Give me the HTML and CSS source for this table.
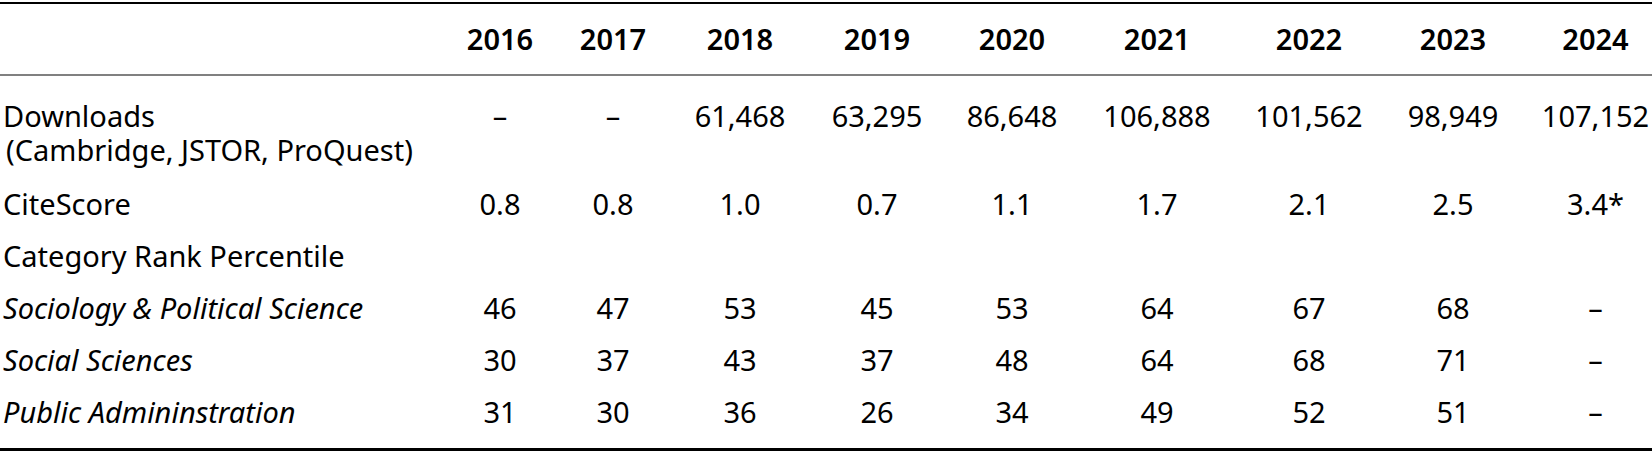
FILE: index.html
```html
<!DOCTYPE html>
<html lang="en">
<head>
<meta charset="utf-8">
<title>Journal metrics</title>
<link rel="stylesheet" href="styles.css">
</head>
<body>
<table class="metrics">
  <colgroup>
    <col class="c-label">
    <col class="c-2016">
    <col class="c-2017">
    <col class="c-2018">
    <col class="c-2019">
    <col class="c-2020">
    <col class="c-2021">
    <col class="c-2022">
    <col class="c-2023">
    <col class="c-2024">
  </colgroup>
  <thead>
    <tr>
      <th class="label"></th>
      <th>2016</th><th>2017</th><th>2018</th><th>2019</th><th>2020</th><th>2021</th><th>2022</th><th>2023</th><th class="last">2024</th>
    </tr>
  </thead>
  <tbody>
    <tr class="first">
      <td class="label"><span class="line">Downloads</span><span class="line indent">(Cambridge, JSTOR, ProQuest)</span></td>
      <td>–</td><td>–</td><td>61,468</td><td>63,295</td><td>86,648</td><td>106,888</td><td>101,562</td><td>98,949</td><td class="last">107,152</td>
    </tr>
    <tr>
      <td class="label">CiteScore</td>
      <td>0.8</td><td>0.8</td><td>1.0</td><td>0.7</td><td>1.1</td><td>1.7</td><td>2.1</td><td>2.5</td><td class="last">3.4*</td>
    </tr>
    <tr>
      <td class="label">Category Rank Percentile</td>
      <td></td><td></td><td></td><td></td><td></td><td></td><td></td><td></td><td class="last"></td>
    </tr>
    <tr>
      <td class="label sub">Sociology &amp; Political Science</td>
      <td>46</td><td>47</td><td>53</td><td>45</td><td>53</td><td>64</td><td>67</td><td>68</td><td class="last">–</td>
    </tr>
    <tr>
      <td class="label sub">Social Sciences</td>
      <td>30</td><td>37</td><td>43</td><td>37</td><td>48</td><td>64</td><td>68</td><td>71</td><td class="last">–</td>
    </tr>
    <tr class="final">
      <td class="label sub">Public Admininstration</td>
      <td>31</td><td>30</td><td>36</td><td>26</td><td>34</td><td>49</td><td>52</td><td>51</td><td class="last">–</td>
    </tr>
  </tbody>
</table>
</body>
</html>
```

FILE: styles.css
```css
html, body {
  margin: 0;
  padding: 0;
  background: #ffffff;
}

body {
  font-family: "Noto Sans", "Open Sans", "Liberation Sans", sans-serif;
  font-size: 29px;
  line-height: 34px;
  color: #000000;
}

.metrics {
  width: 1652px;
  table-layout: fixed;
  border-collapse: separate;
  border-spacing: 0;
  margin-top: 2px;
  border-top: 2px solid #000000;
  border-bottom: 3px solid #000000;
}

.c-label { width: 443px; }
.c-2016 { width: 114px; }
.c-2017 { width: 112px; }
.c-2018 { width: 142px; }
.c-2019 { width: 132px; }
.c-2020 { width: 138px; }
.c-2021 { width: 152px; }
.c-2022 { width: 152px; }
.c-2023 { width: 136px; }
.c-2024 { width: 131px; }

.metrics th,
.metrics td {
  padding: 9px 0;
  text-align: center;
  vertical-align: top;
  white-space: nowrap;
}

.metrics thead th {
  font-weight: 600;
  padding-top: 18px;
  padding-bottom: 18px;
  border-bottom: 2px solid #808080;
}

.metrics .label {
  text-align: left;
  padding-left: 3px;
}

.metrics .line {
  display: block;
}

.metrics .indent {
  padding-left: 3px;
}

.metrics .last {
  padding-left: 18px;
}

.metrics .sub {
  font-style: italic;
}

.metrics tr.first td {
  padding-top: 23px;
  padding-bottom: 11px;
}

.metrics tr.final td {
  padding-bottom: 19px;
}
```
